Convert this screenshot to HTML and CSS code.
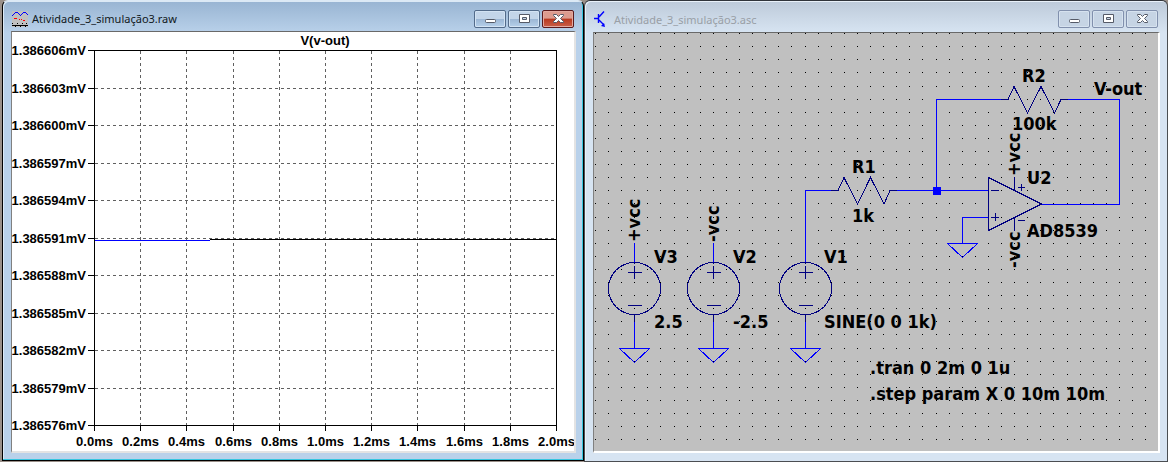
FILE: index.html
```html
<!DOCTYPE html>
<html lang="pt">
<head>
<meta charset="utf-8">
<title>Atividade_3_simulação3</title>
<link rel="stylesheet" href="styles.css">
</head>
<body>
<main class="workspace">
<section class="window active">
<header class="titlebar">
<svg class="icon" width="16" height="16" viewBox="0 0 16 16" shape-rendering="crispEdges"><rect width="16" height="16" fill="#c0c0c0"/><path d="M0 4h1v1H0zM1 3h1v1H1zM2 2h1v1H2zM3 1h3v1H3zM6 2h1v1H6zM7 3h1v1H7zM8 4h1v1H8zM9 3h1v1H9zM10 2h1v1h-1zM11 1h3v1h-3zM14 2h1v1h-1zM15 3h1v1h-1z" fill="#00f"/><path d="M2 7h3v1H2zM7 8h1v1H7zM11 9h2v1h-2zM9 8h1v1H9z" fill="#f00"/><path d="M0 14h16v1H0zM3 15h1v1H3zM8 15h1v1H8zM13 15h1v1h-1zM0 12h1v1H0zM5 12h1v1H5zM14 12h1v1h-1zM10 12h1v1h-1z"/></svg>
<h1 class="title">Atividade_3_simulação3.raw</h1>
<div class="controls">
<button class="control" aria-label="Minimizar"><svg width="13" height="12" viewBox="0 0 13 12"><rect x="1.500" y="6.500" width="10" height="3" rx="1" fill="#fff" stroke="#555a67"/></svg></button>
<button class="control" aria-label="Maximizar"><svg width="13" height="12" viewBox="0 0 13 12"><path d="M1.500 1.500h10v8h-10zM4.500 4.500h4v2h-4z" fill="#fff" fill-rule="evenodd" stroke="#555a67"/></svg></button>
<button class="control close" aria-label="Fechar"><svg width="13" height="12" viewBox="0 0 13 12"><path d="M1.500 1.500h3l2 2 2-2h3v1L8.500 5.500l3 3v1h-3l-2-2-2 2h-3v-1l3-3-3-3z" fill="#fff" stroke="#555a67"/></svg></button>
</div>
</header>
<div class="view plot">
<svg class="drawing" viewBox="12 32 562 418" role="img" aria-label="V(v-out)">
<g id="grid" class="grid"></g>
<path class="axis" d="M94.500 50v381M88 50.500h468.500V431M88 425.500h469"/>
<g id="ticks" class="axis"></g>
<path class="trace" d="M95 240.500h115"/>
<path class="axis" d="M210 239.500h346"/>
<g id="labels" class="axis-text"><text x="325" y="45" text-anchor="middle">V(v-out)</text></g>
</svg>
</div>
</section>
<section class="window">
<header class="titlebar">
<svg class="icon" width="16" height="16" viewBox="0 0 16 16"><path d="M0 7.500h5M4.500 3v9M5 6l5-5.500M5 9l5 5" fill="none" stroke="#00f" stroke-width="1.400"/><path d="M11 16l-4-1 3-3z" fill="#00f"/></svg>
<h2 class="title">Atividade_3_simulação3.asc</h2>
<div class="controls">
<button class="control" aria-label="Minimizar"><svg width="13" height="12" viewBox="0 0 13 12"><rect x="1.500" y="6.500" width="10" height="3" rx="1" fill="#fff" stroke="#555a67"/></svg></button>
<button class="control" aria-label="Maximizar"><svg width="13" height="12" viewBox="0 0 13 12"><path d="M1.500 1.500h10v8h-10zM4.500 4.500h4v2h-4z" fill="#fff" fill-rule="evenodd" stroke="#555a67"/></svg></button>
<button class="control" aria-label="Fechar"><svg width="13" height="12" viewBox="0 0 13 12"><path d="M1.500 1.500h3l2 2 2-2h3v1L8.500 5.500l3 3v1h-3l-2-2-2 2h-3v-1l3-3-3-3z" fill="#fff" stroke="#555a67"/></svg></button>
</div>
</header>
<div class="view schematic">
<svg class="drawing" viewBox="594 33 564 418" role="img" aria-label="Circuito">
<defs>
<g id="source"><circle cy="25.500" r="26"/><path d="M0-1v2M0 3v13M-7 9.500H7M-7 42.500H7M0 52v7"/></g>
<path id="ground" d="M-15 .5H15L0 14.500z"/>
</defs>
<path id="dots"/>
<g class="wire">
<path d="M634.500 243v20M634.500 315v33M713.500 243v20M713.500 315v33M805.500 262v-71.500H832M805.500 315v33M896 190.500h92.500M936.500 190V99.500H1002M1067 99.500h52.500V204.500H1041M988 217.500h-25.500V243"/>
<rect x="933" y="187" width="7" height="7" class="node"/>
<use href="#ground" x="634.500" y="348"/><use href="#ground" x="713.500" y="348"/><use href="#ground" x="805.500" y="348"/><use href="#ground" x="962.500" y="243"/>
</g>
<g class="part">
<use href="#source" x="634.500" y="263"/><use href="#source" x="713.500" y="263"/><use href="#source" x="805.500" y="263"/>
<path d="M831 190.500h7l6-13 13.500 26.500 13-26.500 13.500 26.500 6-13.500h7M1001 99.500h7l6-13 13.500 26.500 13.500-26.500 13.500 26.500 6.500-13.500h7M988.500 177.500v53l53-26.500zM1014.500 177v13M1014.500 217v14M991 190.500h8M991 217.500h8M995.500 213v8M1018 187.500h7M1021.500 184v7M1018 220.500h7"/>
</g>
<g class="part-text">
<text x="654" y="263">V3</text><text x="654" y="328">2.5</text>
<text x="733" y="263">V2</text><text x="733" y="328">-2.5</text>
<text x="824" y="263">V1</text><text x="824" y="328">SINE(0 0 1k)</text>
<text x="852" y="173">R1</text><text x="852" y="222">1k</text>
<text x="1022" y="82">R2</text><text x="1012" y="130">100k</text>
<text x="1094" y="95">V-out</text><text x="1027" y="184">U2</text><text x="1027" y="237">AD8539</text>
<text x="870" y="374">.tran 0 2m 0 1u</text><text x="870" y="400">.step param X 0 10m 10m</text>
<text transform="translate(640 242) rotate(-90)">+vcc</text>
<text transform="translate(719 242) rotate(-90)">-vcc</text>
<text transform="translate(1020 176) rotate(-90)">+vcc</text>
<text transform="translate(1020 268) rotate(-90)">-vcc</text>
</g>
</svg>
</div>
</section>
</main>
<script src="chart.js"></script>
</body>
</html>
```
FILE: styles.css
```css
* { box-sizing: border-box; }
body { margin: 0; background: #9a9089; }
.workspace { display: grid; grid-template-columns: 1fr 1fr; min-height: 100vh; }
.window {
  display: flex; flex-direction: column;
  padding: 0 7px 8px 8px;
  border: 1px solid #4b4e52; border-top-color: #30343a;
  border-radius: 6px 6px 0 0;
  background: linear-gradient(#bdcad9, #d7e4f2 32px);
  box-shadow: inset 1px 1px #e9f1f9;
}
.active {
  margin: 0 0 1px 2px;
  padding: 0 7px 7px 8px;
  border-color: #000; border-top-color: #dce9f5;
  background: linear-gradient(#98b4d2, #b9d1ea 32px);
  box-shadow: inset -1px -1px #35c5df, inset 1px 1px #dce9f5;
}
.titlebar { display: flex; align-items: center; height: 30px; padding: 5px 2px 0 0; }
.window:not(.active) .titlebar { height: 31px; }
.icon { margin: 0 4px 0 1px; }
.title { margin: 0; font: 11px "Noto Sans", sans-serif; color: #999fa6; flex: 1; }
.active .title { color: #101820; }
.controls { display: flex; gap: 2px; }
.control {
  display: flex; align-items: center; justify-content: center;
  width: 32px; height: 18px; padding: 0;
  border: 1px solid #8190ad; border-radius: 2px;
  background: #c6d4e4;
  box-shadow: inset 0 0 0 1px #d6e2ef;
}
.active .control {
  border-color: #536b8a;
  background: linear-gradient(#c3d5e9 50%, #9bb6d4 50%, #b6d0ea);
  box-shadow: inset 0 0 0 1px #d3e3f3;
}
.active .close {
  border-color: #5b1a1c;
  background: linear-gradient(#dc9b8e 45%, #b9391f 50%, #c9604a);
  box-shadow: inset 0 0 0 1px #e3a99f;
}
.view { flex: 1; border: 1px solid; border-width: 1px 2px 2px 1px; border-color: #696969 #fff #fff #808080; }
.plot { background: #fff; border-right-color: #e3e3e3; border-bottom-color: #e3e3e3; }
.schematic { background: #c0c0c0; }
.drawing { display: block; width: 100%; height: auto; shape-rendering: crispEdges; }
.axis, .grid, .trace, .wire, .part { fill: none; stroke-width: 1px; }
.axis { stroke: #000; }
.grid { stroke: #606060; stroke-dasharray: 3 3; }
.trace { stroke: #00f; }
.wire { stroke: #00f; }
.part { stroke: #000080; }
.node { fill: #00f; }
.axis-text { font: bold 13px "Liberation Sans", Arial, sans-serif; }
.part-text { font: bold 18px "DejaVu Sans Condensed", "Noto Sans", sans-serif; }
```
FILE: chart.js
```js
const NS = "http://www.w3.org/2000/svg";
function add(parent, name, attrs, text) {
  const el = document.createElementNS(NS, name);
  for (const key in attrs) el.setAttribute(key, attrs[key]);
  if (text) el.textContent = text;
  document.getElementById(parent).append(el);
}
for (let i = 0; i <= 10; i++) {
  const x = Math.round(94 + i * 46.2) + 0.5;
  const y = Math.round(50 + i * 37.5) + 0.5;
  if (i > 0 && i < 10) {
    add("grid", "path", { d: `M${x} 51V425M95 ${y}H556` });
    add("ticks", "path", { d: `M${x} 425v6M88 ${y}h6` });
  }
  add("labels", "text", { x: x, y: 446, "text-anchor": "middle" }, (i * 0.2).toFixed(1) + "ms");
  add("labels", "text", { x: 86, y: y + 4, "text-anchor": "end" }, (1.386606 - i * 0.000003).toFixed(6) + "mV");
}
let dots = "";
for (let row = 0; row < 32; row++) {
  for (let col = 0; col < 43; col++) {
    dots += `M${Math.round(594.95 + col * 13.1)} ${Math.round(33.1 + row * 13.1)}h1v1h-1z`;
  }
}
document.getElementById("dots").setAttribute("d", dots);
```
